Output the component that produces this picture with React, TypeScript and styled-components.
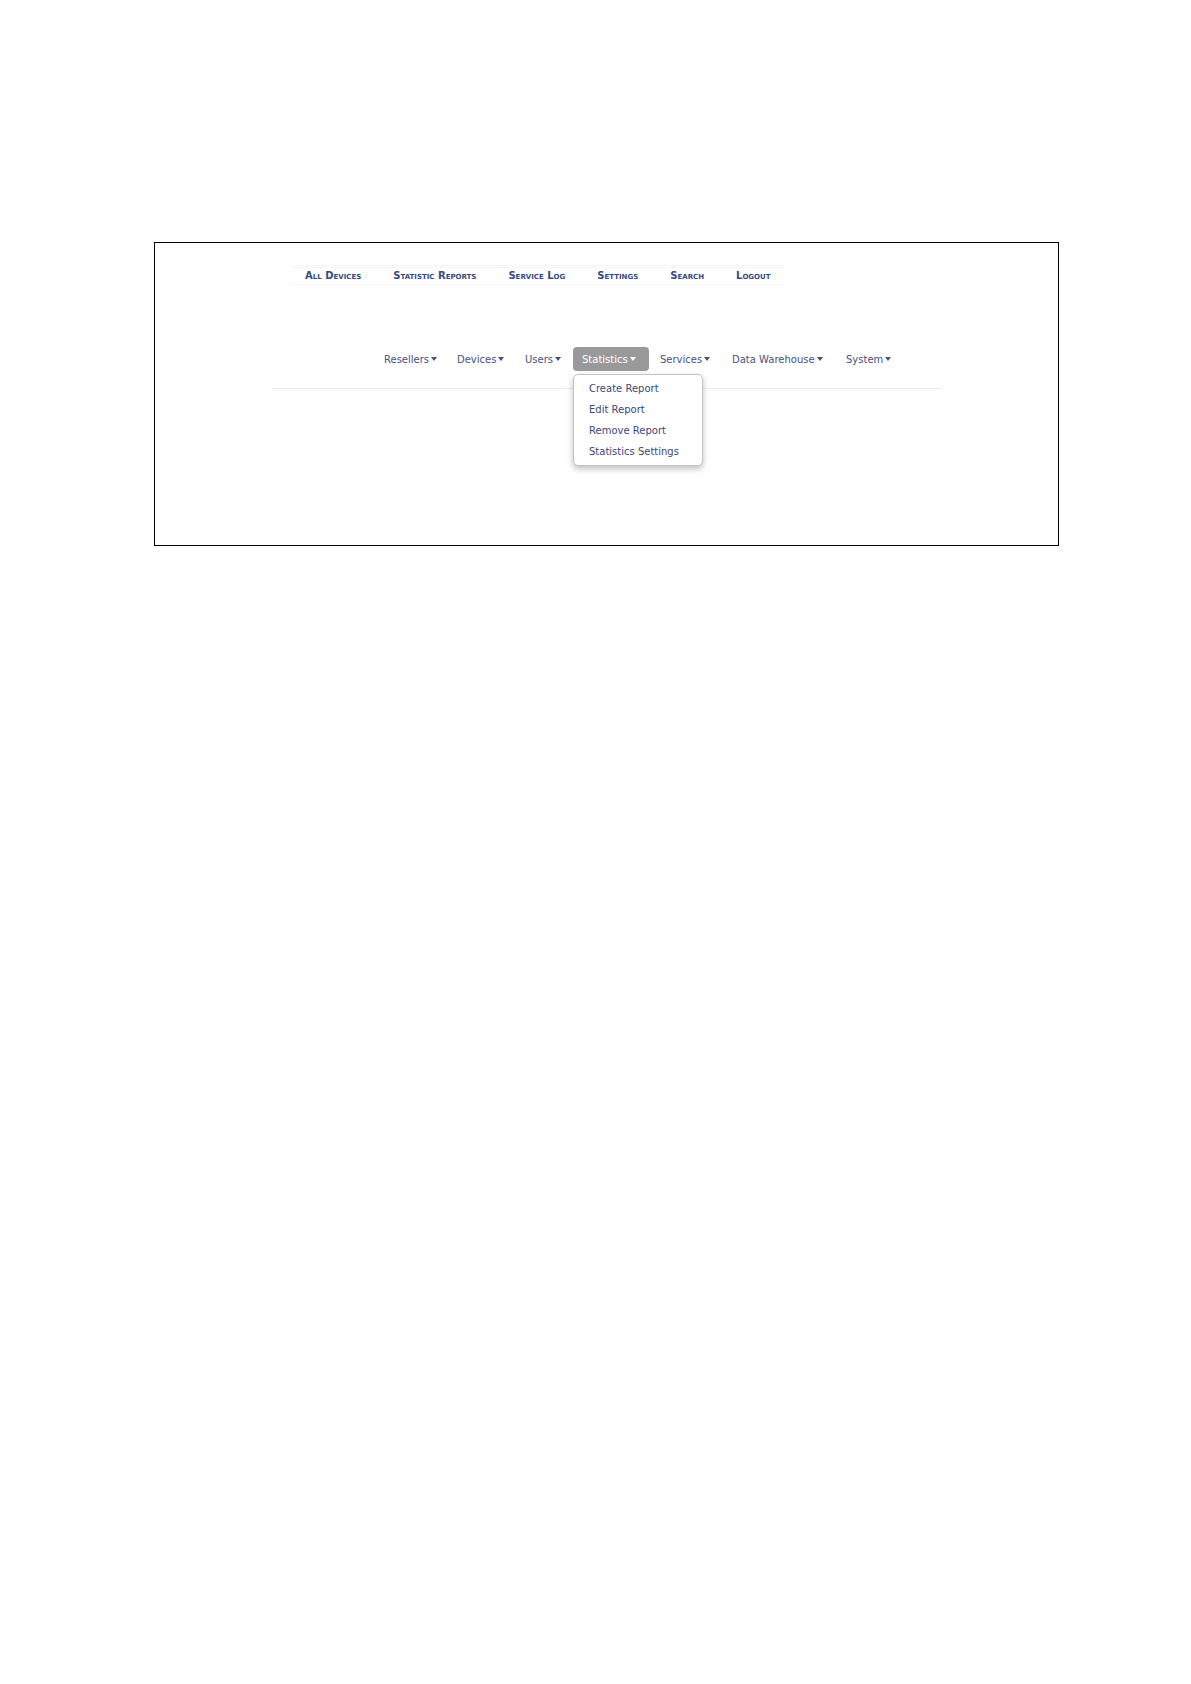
import React, { useState } from 'react';
import styled, { createGlobalStyle } from 'styled-components';

const GlobalStyle = createGlobalStyle`
  * {
    box-sizing: border-box;
  }
  body {
    margin: 0;
    background: #ffffff;
    font-family: 'DejaVu Sans', Verdana, sans-serif;
    font-size: 10px;
  }
  ul {
    margin: 0;
    padding: 0;
    list-style: none;
  }
`;

const Page = styled.main`
  padding: 242px 132px 40px 154px;
`;

const Frame = styled.section`
  min-height: 304px;
  padding: 22px 117px 0;
  border: 1px solid #000000;
`;

const TopBar = styled.nav`
  display: flex;
  width: fit-content;
  margin-left: 20px;
  border-top: 1px solid #f4f5f6;
  border-bottom: 1px solid #f4f6fa;
`;

const TopList = styled.ul`
  display: flex;
  gap: 32px;
  padding: 0 13px;
  margin-top: 1px;
  border-top: 1px solid #f4f5f6;
`;

const TopLink = styled.a`
  display: block;
  color: #354a80;
  font-size: 10px;
  font-weight: bold;
  font-variant: small-caps;
  line-height: 16px;
  text-decoration: none;
  white-space: nowrap;
`;

const MainNav = styled.nav`
  margin-top: 62px;
  padding: 0 0 17px 103px;
  border-bottom: 1px solid #e8eced;
`;

const NavList = styled.ul`
  display: grid;
  grid-template-columns: 71px 66px 55px 76px 70px 112px auto;
  justify-content: start;
  gap: 2px;
`;

const NavItem = styled.li`
  position: relative;
`;

const NavButton = styled.button<{ $active: boolean }>`
  display: flex;
  align-items: center;
  gap: 2px;
  width: 100%;
  height: 24px;
  padding: 0 9px;
  border: 0;
  border-radius: 4px;
  background: ${({ $active }) => ($active ? '#999999' : 'transparent')};
  color: ${({ $active }) => ($active ? '#ffffff' : '#4a4f80')};
  font: inherit;
  white-space: nowrap;
  cursor: pointer;
`;

const Caret = styled.span`
  border-top: 4px solid currentColor;
  border-right: 3px solid transparent;
  border-left: 3px solid transparent;
`;

const Menu = styled.ul`
  position: absolute;
  top: 100%;
  left: 0;
  z-index: 10;
  min-width: 130px;
  margin-top: 3px;
  padding: 3px 15px;
  border: 1px solid #c4c4c4;
  border-radius: 5px;
  background: #ffffff;
  box-shadow: 0 3px 6px rgba(0, 0, 0, 0.25);
`;

const MenuLink = styled.a`
  display: block;
  color: #414678;
  line-height: 21px;
  text-decoration: none;
  white-space: nowrap;
`;

const topLinks = ['All Devices', 'Statistic Reports', 'Service Log', 'Settings', 'Search', 'Logout'];

const navItems = ['Resellers', 'Devices', 'Users', 'Statistics', 'Services', 'Data Warehouse', 'System'];

const menus: Record<string, string[]> = {
  Statistics: ['Create Report', 'Edit Report', 'Remove Report', 'Statistics Settings'],
};

export default function App() {
  const [open, setOpen] = useState('Statistics');

  return (
    <>
      <GlobalStyle />
      <Page>
        <Frame>
          <TopBar>
            <TopList>
              {topLinks.map((label) => (
                <li key={label}>
                  <TopLink href="#">{label}</TopLink>
                </li>
              ))}
            </TopList>
          </TopBar>
          <MainNav>
            <NavList>
              {navItems.map((label) => (
                <NavItem key={label}>
                  <NavButton
                    type="button"
                    $active={open === label}
                    aria-expanded={open === label}
                    onClick={() => setOpen(open === label ? '' : label)}
                  >
                    {label}
                    <Caret />
                  </NavButton>
                  {open === label && menus[label] && (
                    <Menu>
                      {menus[label].map((entry) => (
                        <li key={entry}>
                          <MenuLink href="#">{entry}</MenuLink>
                        </li>
                      ))}
                    </Menu>
                  )}
                </NavItem>
              ))}
            </NavList>
          </MainNav>
        </Frame>
      </Page>
    </>
  );
}
